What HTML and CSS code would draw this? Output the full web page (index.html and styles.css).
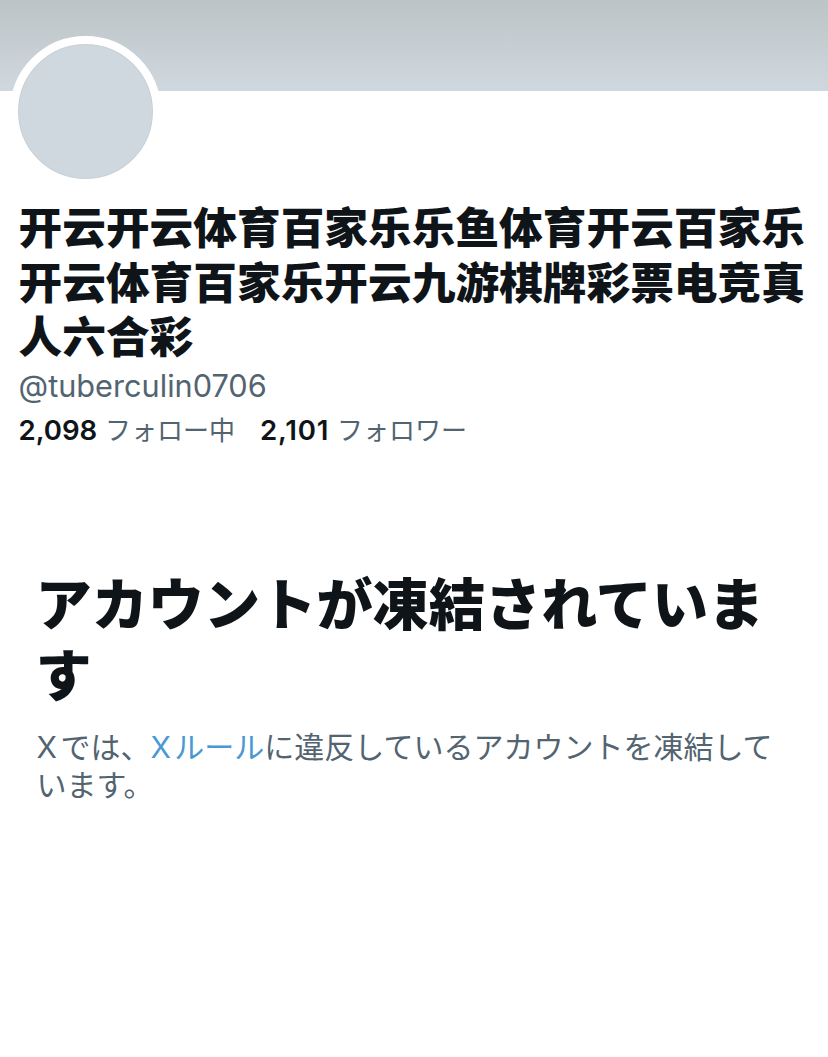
FILE: index.html
```html
<!DOCTYPE html>
<html lang="ja">
<head>
  <meta charset="UTF-8" />
  <meta name="viewport" content="width=device-width, initial-scale=1.0" />
  <title>@tuberculin0706</title>
  <link rel="stylesheet" href="styles.css">
</head>
<body>
  <div class="banner"></div>
  <main class="profile">
    <div class="avatar"></div>
    <h1 class="name" lang="zh-CN">开云开云体育百家乐乐鱼体育开云百家乐<br>开云体育百家乐开云九游棋牌彩票电竞真<br>人六合彩</h1>
    <div class="handle">@tuberculin0706</div>
    <div class="stats">
      <span><b>2,098</b> <span class="label">フォロー中</span></span>
      <span class="followers"><b>2,101</b> <span class="label">フォロワー</span></span>
    </div>
  </main>
  <section class="notice">
    <h2 class="title">アカウントが凍結されていま<br>す</h2>
    <p class="text">X では、<a class="link" href="#">X ルール</a>に違反しているアカウントを凍結して<br>います。</p>
  </section>
</body>
</html>
```

FILE: styles.css
```css
body {
  margin: 0;
  background: #fff;
  color: #0f1419;
  font-family: Inter, "Noto Sans CJK JP", sans-serif;
}
.banner {
  height: 91px;
  background: linear-gradient(#bdc4c6, #d0d8df);
}
.profile {
  padding: 0 19px;
}
.avatar {
  box-sizing: border-box;
  width: 151px;
  height: 151px;
  margin: -55px 0 0 -9px;
  border: 8px solid #fff;
  border-radius: 50%;
  background: #cfd8de;
  box-shadow: inset 0 0 0 1px #c9d1d7;
}
.name {
  margin: 15px 0 0 -0.5px;
  font-family: Inter, "Noto Sans CJK SC", sans-serif;
  font-size: 43.7px;
  font-weight: 800;
  line-height: 54.5px;
  white-space: nowrap;
}
.handle {
  margin-left: -0.5px;
  color: #536471;
  font-size: 30.7px;
  line-height: 39px;
}
.stats {
  display: flex;
  gap: 25px;
  margin: 5px 0 0 -0.5px;
  font-size: 27.6px;
  line-height: 40px;
  white-space: nowrap;
}
.stats b {
  font-weight: 600;
}
.followers b {
  letter-spacing: 0.8px;
}
.label {
  color: #536471;
  font-size: 26px;
}
.notice {
  padding: 0 37px;
  margin-top: 119px;
}
.title {
  margin: 0 0 0 -1.5px;
  font-size: 56.2px;
  font-weight: 800;
  line-height: 71px;
  white-space: nowrap;
}
.text {
  margin: 16px 0 0 -0.5px;
  color: #536471;
  font-size: 30px;
  line-height: 38px;
  word-spacing: -5px;
  white-space: nowrap;
}
.link {
  color: #4a99d3;
  text-decoration: none;
}
```
